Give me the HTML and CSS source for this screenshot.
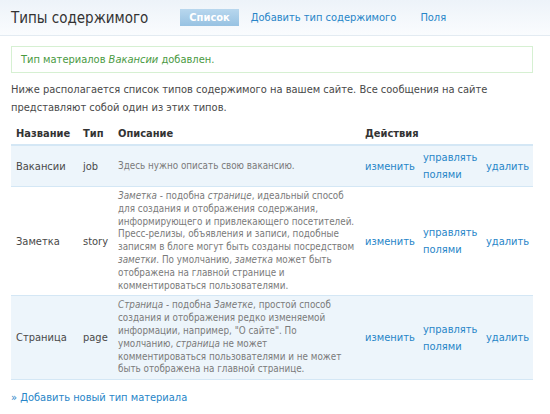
FILE: index.html
```html
<!DOCTYPE html>
<html lang="ru">
<head>
<meta charset="utf-8">
<link rel="stylesheet" href="styles.css">
</head>
<body>
<div class="header">
  <h1 class="title">Типы содержимого</h1>
  <ul class="tabs">
    <li><a class="tab active" href="#">Список</a></li>
    <li><a class="tab" href="#">Добавить тип содержимого</a></li>
    <li><a class="tab" href="#">Поля</a></li>
  </ul>
</div>
<div class="content">
  <div class="message">Тип материалов <em>Вакансии</em> добавлен.</div>
  <p class="intro">Ниже располагается список типов содержимого на вашем сайте. Все сообщения на сайте представляют собой один из этих типов.</p>
  <table class="types">
    <colgroup>
      <col class="w-name"><col class="w-type"><col class="w-desc"><col class="w-edit"><col class="w-fields"><col class="w-del">
    </colgroup>
    <thead>
      <tr>
        <th>Название</th>
        <th>Тип</th>
        <th>Описание</th>
        <th colspan="3">Действия</th>
      </tr>
    </thead>
    <tbody>
      <tr class="odd">
        <td>Вакансии</td>
        <td>job</td>
        <td class="desc">Здесь нужно описать свою вакансию.</td>
        <td class="act"><a href="#">изменить</a></td>
        <td class="act"><a href="#">управлять полями</a></td>
        <td class="act"><a href="#">удалить</a></td>
      </tr>
      <tr class="even">
        <td>Заметка</td>
        <td>story</td>
        <td class="desc"><em>Заметка</em> - подобна <em>странице</em>, идеальный способ для создания и отображения содержания, информирующего и привлекающего посетителей. Пресс-релизы, объявления и записи, подобные записям в блоге могут быть созданы посредством <em>заметки</em>. По умолчанию, <em>заметка</em> может быть отображена на главной странице и комментироваться пользователями.</td>
        <td class="act"><a href="#">изменить</a></td>
        <td class="act"><a href="#">управлять полями</a></td>
        <td class="act"><a href="#">удалить</a></td>
      </tr>
      <tr class="odd">
        <td>Страница</td>
        <td>page</td>
        <td class="desc"><em>Страница</em> - подобна <em>Заметке</em>, простой способ создания и отображения редко изменяемой информации, например, "О сайте". По<br>умолчанию, <em>страница</em> не может<br>комментироваться пользователями и не может<br>быть отображена на главной странице.</td>
        <td class="act"><a href="#">изменить</a></td>
        <td class="act"><a href="#">управлять полями</a></td>
        <td class="act"><a href="#">удалить</a></td>
      </tr>
    </tbody>
  </table>
  <p class="more"><a href="#">» Добавить новый тип материала</a></p>
</div>
</body>
</html>
```
FILE: styles.css
```css
html, body {
  margin: 0;
  padding: 0;
  background: #fff;
}
body {
  font-family: "DejaVu Sans Condensed", "DejaVu Sans", sans-serif;
  font-stretch: condensed;
  font-size: 11px;
  color: #494949;
}
a {
  color: #2785c8;
  text-decoration: none;
}
.header {
  display: flex;
  align-items: center;
  height: 36px;
  padding-left: 11px;
  background: linear-gradient(#edf3f9, #fafcfe);
  border-bottom: 1px solid #e3ebf2;
  box-sizing: border-box;
}
.title {
  margin: 0;
  font-size: 15px;
  font-weight: normal;
  color: #333;
}
.tabs {
  display: flex;
  list-style: none;
  margin: 0 0 0 32px;
  padding: 0;
}
.tab {
  display: block;
  padding: 2px 12px;
  line-height: 13px;
  font-size: 11px;
}
.tab.active {
  background: linear-gradient(#b8d7ee, #97c2e2);
  color: #fff;
  font-weight: bold;
  padding: 2px 9px;
}
.content {
  padding: 10px 17px 0 11px;
}
.message {
  border: 1px solid #d6f0d2;
  background: #fff;
  color: #4a9a3f;
  padding: 5px 9px;
  line-height: 15px;
}
.intro {
  margin: 8px 0 6px;
  line-height: 17.5px;
}
.types {
  width: 522px;
  table-layout: fixed;
  border-collapse: collapse;
}
.w-name { width: 67px; }
.w-type { width: 35px; }
.w-desc { width: 247px; }
.w-edit { width: 58px; }
.w-fields { width: 63px; }
.w-del { width: 52px; }
.types th {
  text-align: left;
  font-weight: bold;
  color: #333;
  padding: 5px 5px 3px;
  border-bottom: 2px solid #d4e7f5;
  line-height: 14px;
}
.types td {
  padding: 3px 5px;
  line-height: 17px;
  vertical-align: middle;
}
.types tr.odd td {
  background: #edf5fb;
}
.types tbody tr {
  border-bottom: 1px solid #d4e7f5;
}
.types td.desc {
  font-size: 9.8px;
  line-height: 12.8px;
  color: #7a7a7a;
  padding-right: 0;
}
.more {
  margin: 11px 0 0;
}
```
